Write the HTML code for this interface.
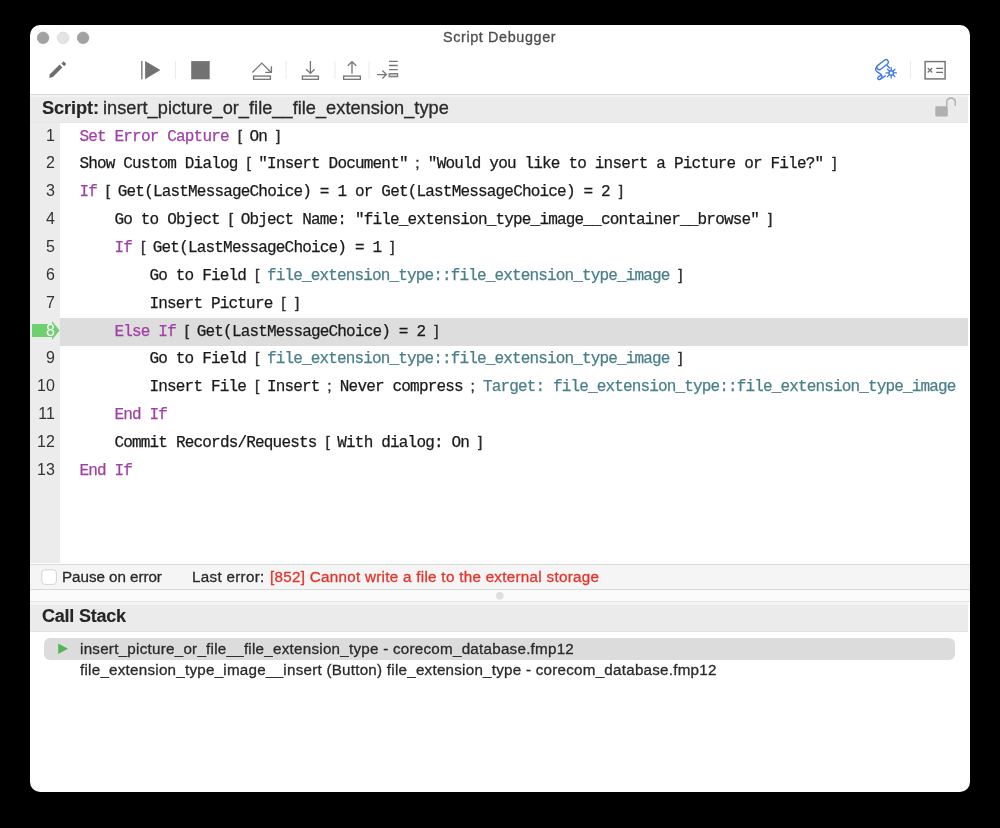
<!DOCTYPE html>
<html><head><meta charset="utf-8">
<style>
html,body{margin:0;padding:0;background:#000;width:1000px;height:828px;overflow:hidden}
#win{position:absolute;left:30px;top:25px;width:940px;height:767px;background:#fff;border-radius:10px;overflow:hidden}
.abs{position:absolute}
svg{position:absolute;left:0;top:0;will-change:transform}
.mono{stroke-width:0.25px;font-family:"Liberation Mono",monospace;font-size:16.0px;letter-spacing:-0.840px}
.br{font-family:"Liberation Sans",sans-serif;font-size:15.5px;fill:#2a2a2a;stroke:#2a2a2a;stroke-width:0.35px}
.ln{font-family:"Liberation Sans",sans-serif;font-size:16px;fill:#333}
.sans{font-family:"Liberation Sans",sans-serif}
</style></head>
<body>
<div id="win">
  <!-- toolbar border -->
  <div class="abs" style="left:0;top:69px;width:940px;height:1px;background:#d9d9d9"></div>
  <!-- script header bar -->
  <div class="abs" style="left:0;top:70px;width:938px;height:27px;background:#ebebeb"></div>
  <div class="abs" style="left:0;top:70px;width:938px;height:2px;background:#f2f2f2"></div>
  <div class="abs" style="left:0;top:97px;width:938px;height:1px;background:#e4e4e4"></div>
  <!-- gutter -->
  <div class="abs" style="left:0;top:98px;width:29.6px;height:439.5px;background:#ececec"></div>
  <!-- row 8 highlight -->
  <div class="abs" style="left:29.6px;top:293.1px;width:908.4px;height:27.9px;background:#dddddd"></div>
  <!-- bottom bars -->
  <div class="abs" style="left:0;top:539px;width:940px;height:1px;background:#d8d8d8"></div>
  <div class="abs" style="left:0;top:540px;width:940px;height:24px;background:#f5f5f5"></div>
  <div class="abs" style="left:0;top:564px;width:940px;height:1px;background:#d8d8d8"></div>
  <div class="abs" style="left:0;top:565px;width:940px;height:11px;background:#fbfbfb"></div>
  <div class="abs" style="left:0;top:576px;width:940px;height:1px;background:#e4e4e4"></div>
  <div class="abs" style="left:0;top:577px;width:938px;height:3px;background:#f5f5f5"></div>
  <div class="abs" style="left:0;top:580px;width:938px;height:25.5px;background:#ebebeb"></div>
  <div class="abs" style="left:0;top:605.5px;width:938px;height:1px;background:#e3e3e3"></div>
  <!-- call stack selected row -->
  <div class="abs" style="left:14px;top:613px;width:911px;height:21.5px;background:#dcdcdc;border-radius:6px"></div>
</div>
<svg width="1000" height="828" viewBox="0 0 1000 828">
  <!-- traffic lights -->
  <circle cx="43.1" cy="37.8" r="5.8" fill="#a2a2a2" stroke="#939393" stroke-width="0.6"/>
  <circle cx="63.1" cy="37.8" r="5.8" fill="#e4e4e4" stroke="#d2d2d2" stroke-width="0.6"/>
  <circle cx="83.1" cy="37.8" r="5.8" fill="#a2a2a2" stroke="#939393" stroke-width="0.6"/>
  <!-- header -->
  <text id="t_title" class="sans" x="443.00" y="41.50" font-size="14.4" font-weight="normal" fill="#4d4d4d" stroke="#4d4d4d" stroke-width="0.3" style="letter-spacing:0.614px">Script Debugger</text><text id="t_script" class="sans" x="42.00" y="114.00" font-size="18.2" font-weight="bold" fill="#262626" stroke="#262626" stroke-width="0.15" style="letter-spacing:-0.100px">Script:</text><text id="t_sname" class="sans" x="103.00" y="114.00" font-size="18.2" font-weight="normal" fill="#2a2a2a" stroke="#2a2a2a" stroke-width="0.3" style="letter-spacing:0.024px">insert_picture_or_file__file_extension_type</text><text id="t_pause" class="sans" x="62.00" y="582.00" font-size="15.2" font-weight="normal" fill="#2a2a2a" stroke="#2a2a2a" stroke-width="0.3" style="letter-spacing:-0.046px">Pause on error</text><text id="t_last" class="sans" x="192.00" y="582.00" font-size="15.2" font-weight="normal" fill="#2a2a2a" stroke="#2a2a2a" stroke-width="0.3" style="letter-spacing:0.300px">Last error:</text><text id="t_red" class="sans" x="270.00" y="582.20" font-size="15.2" font-weight="normal" fill="#e5332a" stroke="#e5332a" stroke-width="0.3" style="letter-spacing:0.292px">[852] Cannot write a file to the external storage</text><text id="t_cs" class="sans" x="42.00" y="622.00" font-size="18.0" font-weight="bold" fill="#262626" stroke="#262626" stroke-width="0.15" style="letter-spacing:-0.222px">Call Stack</text><text id="t_row1" class="sans" x="80.00" y="654.00" font-size="15.2" font-weight="normal" fill="#2a2a2a" stroke="#2a2a2a" stroke-width="0.3" style="letter-spacing:0.251px">insert_picture_or_file__file_extension_type - corecom_database.fmp12</text><text id="t_row2" class="sans" x="80.00" y="674.90" font-size="15.2" font-weight="normal" fill="#2a2a2a" stroke="#2a2a2a" stroke-width="0.3" style="letter-spacing:0.244px">file_extension_type_image__insert (Button) file_extension_type - corecom_database.fmp12</text>
  <text class="ln" x="54.8" y="140.50" text-anchor="end">1</text><text class="ln" x="54.8" y="168.37" text-anchor="end">2</text><text class="ln" x="54.8" y="196.24" text-anchor="end">3</text><text class="ln" x="54.8" y="224.11" text-anchor="end">4</text><text class="ln" x="54.8" y="251.98" text-anchor="end">5</text><text class="ln" x="54.8" y="279.85" text-anchor="end">6</text><text class="ln" x="54.8" y="307.72" text-anchor="end">7</text><text class="ln" x="54.8" y="363.46" text-anchor="end">9</text><text class="ln" x="54.8" y="391.33" text-anchor="end">10</text><text class="ln" x="54.8" y="419.20" text-anchor="end">11</text><text class="ln" x="54.8" y="447.07" text-anchor="end">12</text><text class="ln" x="54.8" y="474.94" text-anchor="end">13</text>
  <text class="mono" style="letter-spacing:-0.815px" fill="#a040a5" stroke="#a040a5" x="79.40" y="140.50">Set Error Capture</text><text class="br" x="237.65" y="140.50">[</text><text class="mono" style="letter-spacing:-0.815px" fill="#1a1a1a" stroke="#1a1a1a" x="249.55" y="140.50">On</text><text class="br" x="276.12" y="140.50">]</text><text class="mono" style="letter-spacing:-0.815px" fill="#1a1a1a" stroke="#1a1a1a" x="79.40" y="168.37">Show Custom Dialog</text><text class="br" x="246.43" y="168.37">[</text><text class="mono" style="letter-spacing:-0.815px" fill="#1a1a1a" stroke="#1a1a1a" x="258.33" y="168.37">&quot;Insert Document&quot;</text><text class="br" x="415.27" y="168.37">;</text><text class="mono" style="letter-spacing:-0.815px" fill="#1a1a1a" stroke="#1a1a1a" x="427.87" y="168.37">&quot;Would you like to insert a Picture or File?&quot;</text><text class="br" x="832.20" y="168.37">]</text><text class="mono" style="letter-spacing:-0.815px" fill="#a040a5" stroke="#a040a5" x="79.40" y="196.24">If</text><text class="br" x="105.87" y="196.24">[</text><text class="mono" style="letter-spacing:-0.815px" fill="#1a1a1a" stroke="#1a1a1a" x="117.77" y="196.24">Get(LastMessageChoice) = 1 or Get(LastMessageChoice) = 2</text><text class="br" x="618.73" y="196.24">]</text><text class="mono" style="letter-spacing:-0.815px" fill="#1a1a1a" stroke="#1a1a1a" x="114.44" y="224.11">Go to Object</text><text class="br" x="228.76" y="224.11">[</text><text class="mono" style="letter-spacing:-0.815px" fill="#1a1a1a" stroke="#1a1a1a" x="240.66" y="224.11">Object Name: &quot;file_extension_type_image__container__browse&quot;</text><text class="br" x="767.98" y="224.11">]</text><text class="mono" style="letter-spacing:-0.815px" fill="#a040a5" stroke="#a040a5" x="114.44" y="251.98">If</text><text class="br" x="140.91" y="251.98">[</text><text class="mono" style="letter-spacing:-0.815px" fill="#1a1a1a" stroke="#1a1a1a" x="152.81" y="251.98">Get(LastMessageChoice) = 1</text><text class="br" x="390.22" y="251.98">]</text><text class="mono" style="letter-spacing:-0.815px" fill="#1a1a1a" stroke="#1a1a1a" x="149.48" y="279.85">Go to Field</text><text class="br" x="255.01" y="279.85">[</text><text class="mono" style="letter-spacing:-0.852px" fill="#4a7f8a" stroke="#4a7f8a" x="266.92" y="279.85">file_extension_type::file_extension_type_image</text><text class="br" x="678.32" y="279.85">]</text><text class="mono" style="letter-spacing:-0.815px" fill="#1a1a1a" stroke="#1a1a1a" x="149.48" y="307.72">Insert Picture</text><text class="br" x="281.37" y="307.72">[</text><text class="br" x="295.07" y="307.72">]</text><text class="mono" style="letter-spacing:-0.815px" fill="#a040a5" stroke="#a040a5" x="114.44" y="335.59">Else If</text><text class="br" x="184.84" y="335.59">[</text><text class="mono" style="letter-spacing:-0.815px" fill="#1a1a1a" stroke="#1a1a1a" x="196.74" y="335.59">Get(LastMessageChoice) = 2</text><text class="br" x="434.14" y="335.59">]</text><text class="mono" style="letter-spacing:-0.815px" fill="#1a1a1a" stroke="#1a1a1a" x="149.48" y="363.46">Go to Field</text><text class="br" x="255.01" y="363.46">[</text><text class="mono" style="letter-spacing:-0.852px" fill="#4a7f8a" stroke="#4a7f8a" x="266.92" y="363.46">file_extension_type::file_extension_type_image</text><text class="br" x="678.32" y="363.46">]</text><text class="mono" style="letter-spacing:-0.815px" fill="#1a1a1a" stroke="#1a1a1a" x="149.48" y="391.33">Insert File</text><text class="br" x="255.01" y="391.33">[</text><text class="mono" style="letter-spacing:-0.815px" fill="#1a1a1a" stroke="#1a1a1a" x="266.92" y="391.33">Insert</text><text class="br" x="327.22" y="391.33">;</text><text class="mono" style="letter-spacing:-0.815px" fill="#1a1a1a" stroke="#1a1a1a" x="339.82" y="391.33">Never compress</text><text class="br" x="470.41" y="391.33">;</text><text class="mono" style="letter-spacing:-0.852px" fill="#4a7f8a" stroke="#4a7f8a" x="483.01" y="391.33">Target: file_extension_type::file_extension_type_image</text><text class="mono" style="letter-spacing:-0.815px" fill="#a040a5" stroke="#a040a5" x="114.44" y="419.20">End If</text><text class="mono" style="letter-spacing:-0.815px" fill="#1a1a1a" stroke="#1a1a1a" x="114.44" y="447.07">Commit Records/Requests</text><text class="br" x="325.39" y="447.07">[</text><text class="mono" style="letter-spacing:-0.815px" fill="#1a1a1a" stroke="#1a1a1a" x="337.30" y="447.07">With dialog: On</text><text class="br" x="478.07" y="447.07">]</text><text class="mono" style="letter-spacing:-0.815px" fill="#a040a5" stroke="#a040a5" x="79.40" y="474.94">End If</text>

  <!-- toolbar icons -->
  <g fill="#6e6e6e">
    <path d="M49.2,78 L49.9,74.2 L59.6,64.6 L62.4,67.4 L52.9,77.1 Z"/>
    <path d="M61.4,63.4 L63.6,61.3 L66.3,64.1 L64.2,66.2 Z"/>
  </g>
  <rect x="141" y="61" width="1.6" height="18.3" fill="#8a8a8a"/>
  <path d="M145.1,60.9 L160.4,70 L145.1,79.3 Z" fill="#727272"/>
  <rect x="175" y="61" width="1" height="18" fill="#ececec"/>
  <rect x="191.2" y="61.1" width="18.5" height="18.2" fill="#727272"/>
  <g fill="none" stroke="#777" stroke-width="1.35">
    <path d="M252.3,72.6 L261.8,63.1 L271.2,72.5"/>
    <path d="M265.3,72.3 L271.4,72.3 L271.4,66.2"/>
    <rect x="253.6" y="76.1" width="16.8" height="3.2"/>
    <path d="M310.4,61 L310.4,73.4 M306.2,69.2 L310.4,73.4 L314.6,69.2"/>
    <rect x="302.4" y="76.1" width="16" height="3.2"/>
    <path d="M352,61.6 L352,73.8 M347.8,65.8 L352,61.6 L356.2,65.8"/>
    <rect x="343.6" y="76.1" width="16.8" height="3.2"/>
    <path d="M377,74.6 L386.4,74.6 M382.4,70.6 L386.4,74.6 L382.4,78.6"/>
    <path d="M389,61.4 L397.8,61.4 M389,65.5 L397.8,65.5 M389,69.6 L397.8,69.6"/>
  </g>
  <rect x="389.2" y="73.7" width="8.4" height="3" fill="#cfcfcf" stroke="#777" stroke-width="1.2"/>
  <rect x="285.5" y="61" width="1" height="18" fill="#ececec"/>
  <rect x="334.5" y="61" width="1" height="18" fill="#ececec"/>
  <rect x="368.5" y="61" width="1" height="18" fill="#ececec"/>
  <rect x="910" y="61" width="1" height="18" fill="#ececec"/>
  <!-- scroll icon -->
  <g fill="none" stroke="#3d7be6" stroke-width="1.4" stroke-linecap="round" stroke-linejoin="round" transform="translate(872,57)">
    <rect x="-6.6" y="-2.4" width="13.2" height="4.8" rx="2.4" transform="translate(10.6,7.7) rotate(-38)"/>
    <path d="M4.9,9.8 C3.1,11.4 3.3,13.6 5.2,14.8 L8.4,16.9 C10,18 10.2,19.9 9.3,21.2 C8.4,22.6 6.6,23 5.9,21.9 C5.2,20.8 6.2,19.5 8.6,18.6"/>
    <path d="M8.2,22.1 L13.3,18.9"/>
    <path d="M15.1,8.6 L17.6,11"/>
  </g>
  <g stroke="#3d7be6" stroke-width="1.3" stroke-linecap="round" transform="translate(891.2,72.9)">
    <path d="M0,-5.2 L0,5.2 M-5.2,0 L5.2,0 M-3.7,-3.7 L3.7,3.7 M-3.7,3.7 L3.7,-3.7"/>
    <circle r="2.2" fill="#fff" stroke-width="1.4"/>
  </g>
  <!-- variables icon -->
  <rect x="925.1" y="61.6" width="20" height="17.3" fill="none" stroke="#777" stroke-width="1.5"/>
  <g stroke="#6a6a6a" stroke-width="1.1">
    <path d="M927.7,68 L932.2,72.5 M932.2,68 L927.7,72.5"/>
    <path d="M936.2,68.4 L943,68.4 M936.2,72.4 L943,72.4"/>
  </g>
  <!-- lock -->
  <rect x="935.3" y="106.3" width="12.5" height="10.1" rx="1.2" fill="#b0b0b0"/>
  <path d="M946.7,106.5 L946.7,101.2 A4.5,4.5 0 0 1 955.3,101.2 L955.3,105.8" fill="none" stroke="#b0b0b0" stroke-width="1.4"/>
  <!-- green marker row 8 -->
  <path d="M32,324 L52,324 L52,321 L59.6,330.5 L52,339.8 L52,337 L32,337 Z" fill="#6fd06f"/>
  <text class="ln" x="55" y="335.59" text-anchor="end" fill="#fff" style="fill:#fff">8</text>
  <!-- checkbox -->
  <rect x="41.8" y="569.8" width="14.6" height="14.6" rx="3" fill="#fff" stroke="#cfcfcf" stroke-width="0.9"/>
  <!-- splitter dot -->
  <circle cx="499.8" cy="595.8" r="3.8" fill="#dedede"/>
  <!-- play triangle -->
  <path d="M58.2,643.5 L68,648.8 L58.2,654 Z" fill="#55b555"/>

</svg>
</body></html>
